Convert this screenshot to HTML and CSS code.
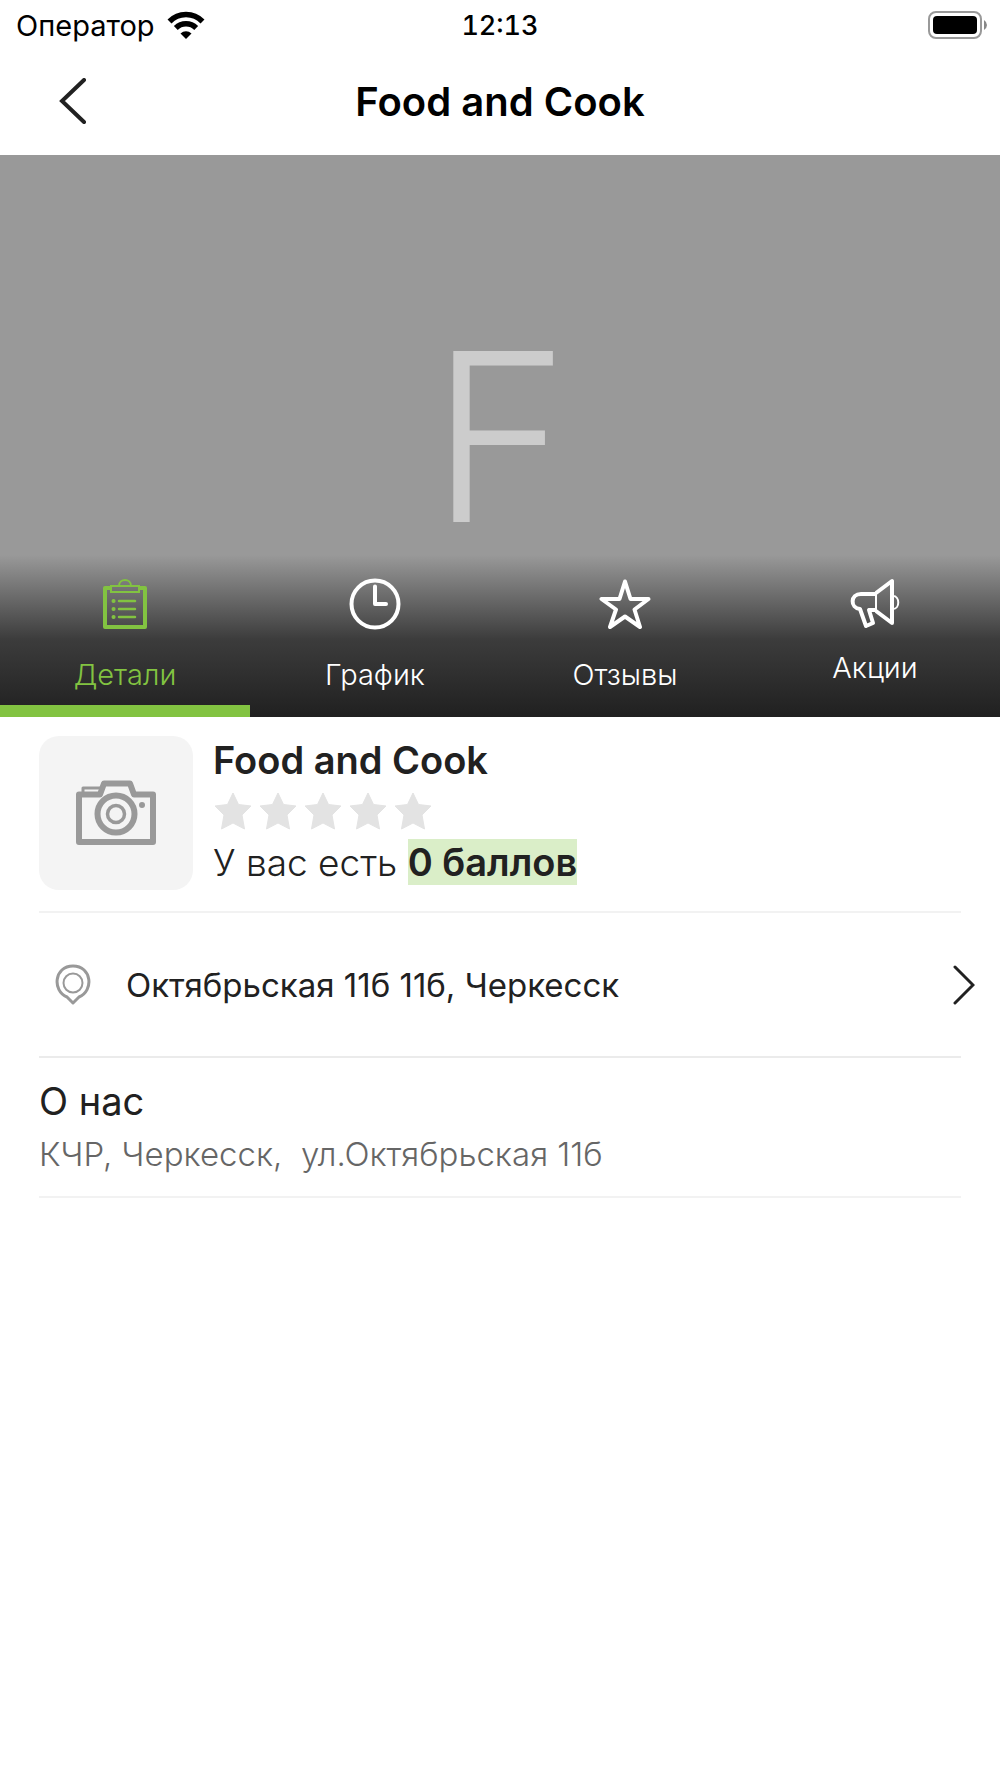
FILE: index.html
```html
<!DOCTYPE html>
<html lang="ru">
<head>
    <meta charset="UTF-8">
    <meta name="viewport" content="width=device-width, initial-scale=1.0">
    <title>Food and Cook</title>
    <link rel="stylesheet" href="styles.css">
</head>
<body>
    <div class="status-bar">
        <div class="carrier">
            <span>Оператор</span>
            <svg width="38" height="28" viewBox="0 0 38 28">
                <path d="M2.500 10.500A23 23 0 0 1 35.500 10.500" fill="none" stroke="#000" stroke-width="5.500"/>
                <path d="M8.800 17A14.500 14.500 0 0 1 29.200 17" fill="none" stroke="#000" stroke-width="5.500"/>
                <path d="M19 28L13.500 22.500A8 8 0 0 1 24.500 22.500Z"/>
            </svg>
        </div>
        <span class="time">12:13</span>
        <svg class="battery" width="60" height="28" viewBox="0 0 60 28">
            <rect x="1" y="1" width="52" height="26" rx="7" fill="none" stroke="#999" stroke-width="2"/>
            <rect x="5" y="5" width="44" height="18" rx="4"/>
            <path d="M56 9Q59 11 59 14Q59 17 56 19Z" fill="#888"/>
        </svg>
    </div>

    <header class="header">
        <button type="button" class="back" aria-label="Назад">
            <svg width="28" height="46" viewBox="0 0 28 46">
                <path d="M25 2L3 23L25 44" fill="none" stroke="#212121" stroke-width="4" stroke-linecap="round"/>
            </svg>
        </button>
        <h1>Food and Cook</h1>
    </header>

    <section class="hero">
        <div class="hero-letter">F</div>
        <nav class="tabs">
            <a href="#details" class="tab active">
                <svg width="52" height="52" viewBox="0 0 52 52" fill="none" stroke="currentColor">
                    <path d="M13 10H6V49H46V10H39" stroke-width="4" stroke-linejoin="round"/>
                    <rect x="12" y="8" width="28" height="6" stroke-width="2"/>
                    <path d="M20 8C20 0 32 0 32 8" stroke-width="2"/>
                    <path d="M20 23H36M20 31H36M20 39H36" stroke-width="2.500" stroke-linecap="round"/>
                    <path d="M14.500 23H14.600M14.500 31H14.600M14.500 39H14.600" stroke-width="4" stroke-linecap="round"/>
                </svg>
                <span>Детали</span>
            </a>
            <a href="#schedule" class="tab">
                <svg width="52" height="52" viewBox="0 0 52 52" fill="none" stroke="currentColor" stroke-width="4">
                    <circle cx="26" cy="26" r="23.500"/>
                    <path d="M26 8.500V26H37" stroke-linecap="round" stroke-linejoin="round"/>
                </svg>
                <span>График</span>
            </a>
            <a href="#reviews" class="tab">
                <svg width="52" height="52" viewBox="0 0 52 52" fill="none" stroke="currentColor" stroke-width="4" stroke-linejoin="round">
                    <path d="M26 3.500L31.500 21H49.500L35.500 31.500L41 49L26 38.500L11 49L17 31.500L2.500 21H20.500Z"/>
                </svg>
                <span>Отзывы</span>
            </a>
            <a href="#promo" class="tab promo">
                <svg width="52" height="52" viewBox="0 0 52 52" fill="none" stroke="currentColor" stroke-width="4" stroke-linejoin="round">
                    <path d="M27 15L43 3V45L27 33"/>
                    <path d="M27 16H12C1 16 1 30 11 31L17 48L24 45L20 32H27"/>
                    <path d="M27 15V33" stroke-width="2"/>
                    <path d="M44 18C51 18 51 31 44 31" stroke-width="2"/>
                </svg>
                <span>Акции</span>
            </a>
        </nav>
    </section>

    <main class="content" id="details">
        <section class="profile">
            <div class="logo">
                <svg width="80" height="66" viewBox="0 0 80 66" fill="none" stroke="#999">
                    <path d="M3 14.500H24L28 3.500H54L58 14.500H77V62H3Z" stroke-width="6" stroke-linejoin="round"/>
                    <path d="M7 12V8H24" stroke-width="3" stroke-linejoin="round"/>
                    <circle cx="40" cy="34" r="18.500" fill="#f4f4f4" stroke-width="6"/>
                    <circle cx="40" cy="34" r="8.500" stroke-width="3.500"/>
                    <circle cx="66" cy="25" r="3" fill="#999" stroke="none"/>
                </svg>
            </div>
            <div class="info">
                <h2>Food and Cook</h2>
                <div class="stars" role="img" aria-label="Рейтинг 0 из 5">
                    <svg viewBox="0 0 38 38"><path d="M19 1L24.500 12.500L37 14L28 23L30.500 37L19 31L7.500 37L10 23L1 14L13.500 12.500Z"/></svg>
                    <svg viewBox="0 0 38 38"><path d="M19 1L24.500 12.500L37 14L28 23L30.500 37L19 31L7.500 37L10 23L1 14L13.500 12.500Z"/></svg>
                    <svg viewBox="0 0 38 38"><path d="M19 1L24.500 12.500L37 14L28 23L30.500 37L19 31L7.500 37L10 23L1 14L13.500 12.500Z"/></svg>
                    <svg viewBox="0 0 38 38"><path d="M19 1L24.500 12.500L37 14L28 23L30.500 37L19 31L7.500 37L10 23L1 14L13.500 12.500Z"/></svg>
                    <svg viewBox="0 0 38 38"><path d="M19 1L24.500 12.500L37 14L28 23L30.500 37L19 31L7.500 37L10 23L1 14L13.500 12.500Z"/></svg>
                </div>
                <p class="points">У вас есть <mark>0 баллов</mark></p>
            </div>
        </section>

        <a href="#map" class="address">
            <svg width="36" height="42" viewBox="0 0 36 42" fill="none" stroke="#999">
                <path d="M18 39L12 33C-3 27 -1 2 18 2C37 2 39 27 24 33Z" stroke-width="3" stroke-linejoin="round"/>
                <circle cx="18" cy="19" r="9.500" stroke-width="2"/>
            </svg>
            <span>Октябрьская 11б 11б, Черкесск</span>
            <svg class="chevron" width="22" height="40" viewBox="0 0 22 40">
                <path d="M2 2L20 20L2 38" fill="none" stroke="#212121" stroke-width="3" stroke-linecap="round"/>
            </svg>
        </a>

        <section class="about">
            <h3>О нас</h3>
            <p>КЧР, Черкесск,&nbsp; ул.Октябрьская 11б</p>
        </section>
    </main>
</body>
</html>
```
FILE: styles.css
```css
body {
    font-family: Inter, "Liberation Sans", sans-serif;
    background-color: #fff;
    color: #212121;
    margin: 0;
}

h1, h2, h3, p {
    margin: 0;
}

svg {
    display: block;
    flex-shrink: 0;
}

.status-bar {
    display: grid;
    grid-template-columns: 1fr auto 1fr;
    align-items: center;
    height: 50px;
    padding: 0 12px;
    color: #000;
    font-size: 29px;
}

.carrier {
    display: flex;
    align-items: center;
    gap: 12px;
    padding-left: 4px;
}

.time {
    font-size: 27px;
    font-weight: 500;
    font-variant-numeric: tabular-nums;
}

.battery {
    justify-self: end;
}

.header {
    display: grid;
    grid-template-columns: 1fr auto 1fr;
    align-items: center;
    height: 102px;
    padding-bottom: 3px;
}

.back {
    justify-self: start;
    padding: 0;
    margin-left: 59px;
    border: none;
    background: none;
    cursor: pointer;
}

h1 {
    color: #000;
    font-size: 40px;
    font-weight: 600;
}

.hero {
    position: relative;
    height: 562px;
    background-color: #999;
}

.hero-letter {
    padding-top: 139px;
    color: #ccc;
    font-size: 235px;
    font-weight: 300;
    line-height: 286px;
    text-align: center;
}

.tabs {
    position: absolute;
    left: 0;
    right: 0;
    bottom: 0;
    display: grid;
    grid-template-columns: repeat(4, 1fr);
    height: 162px;
    background: linear-gradient(#999, #3c3c3c 52%, #202020);
}

.tab {
    box-sizing: border-box;
    display: flex;
    flex-direction: column;
    align-items: center;
    gap: 28px;
    padding-top: 23px;
    border-bottom: 12px solid transparent;
    color: #fff;
    font-size: 29px;
    font-weight: 300;
    line-height: 34px;
    text-decoration: none;
}

.tab.active {
    color: #82c341;
    border-bottom-color: #82c341;
}

.tab.promo {
    gap: 21px;
}

.content {
    padding: 0 39px;
}

.profile {
    display: flex;
    gap: 20px;
    padding: 19px 0 21px;
    border-bottom: 2px solid #f2f2f2;
}

.logo {
    display: flex;
    align-items: center;
    justify-content: center;
    width: 154px;
    height: 154px;
    border-radius: 20px;
    background-color: #f4f4f4;
}

h2 {
    font-size: 38px;
    font-weight: 600;
    line-height: 48px;
}

.stars {
    display: flex;
    gap: 7px;
    margin: 8px 0 7px;
    padding-left: 1px;
}

.stars svg {
    width: 38px;
    height: 38px;
    fill: #e3e3e3;
    stroke: #e3e3e3;
    stroke-linejoin: round;
}

.points {
    font-size: 37px;
    font-weight: 300;
    line-height: 50px;
}

mark {
    background-color: #daeec8;
    color: inherit;
    font-size: 38px;
    font-weight: 600;
}

.address {
    display: flex;
    align-items: center;
    gap: 35px;
    height: 143px;
    padding-left: 16px;
    border-bottom: 2px solid #ebebeb;
    color: inherit;
    font-size: 33px;
    text-decoration: none;
}

.chevron {
    margin-left: auto;
    margin-right: -14px;
}

.about {
    padding: 19px 0 18px;
    border-bottom: 2px solid #f2f2f2;
}

h3 {
    margin-bottom: 5px;
    font-size: 38px;
    font-weight: 400;
    line-height: 48px;
}

.about p {
    color: #666;
    font-size: 33px;
    font-weight: 300;
    line-height: 48px;
}
```
